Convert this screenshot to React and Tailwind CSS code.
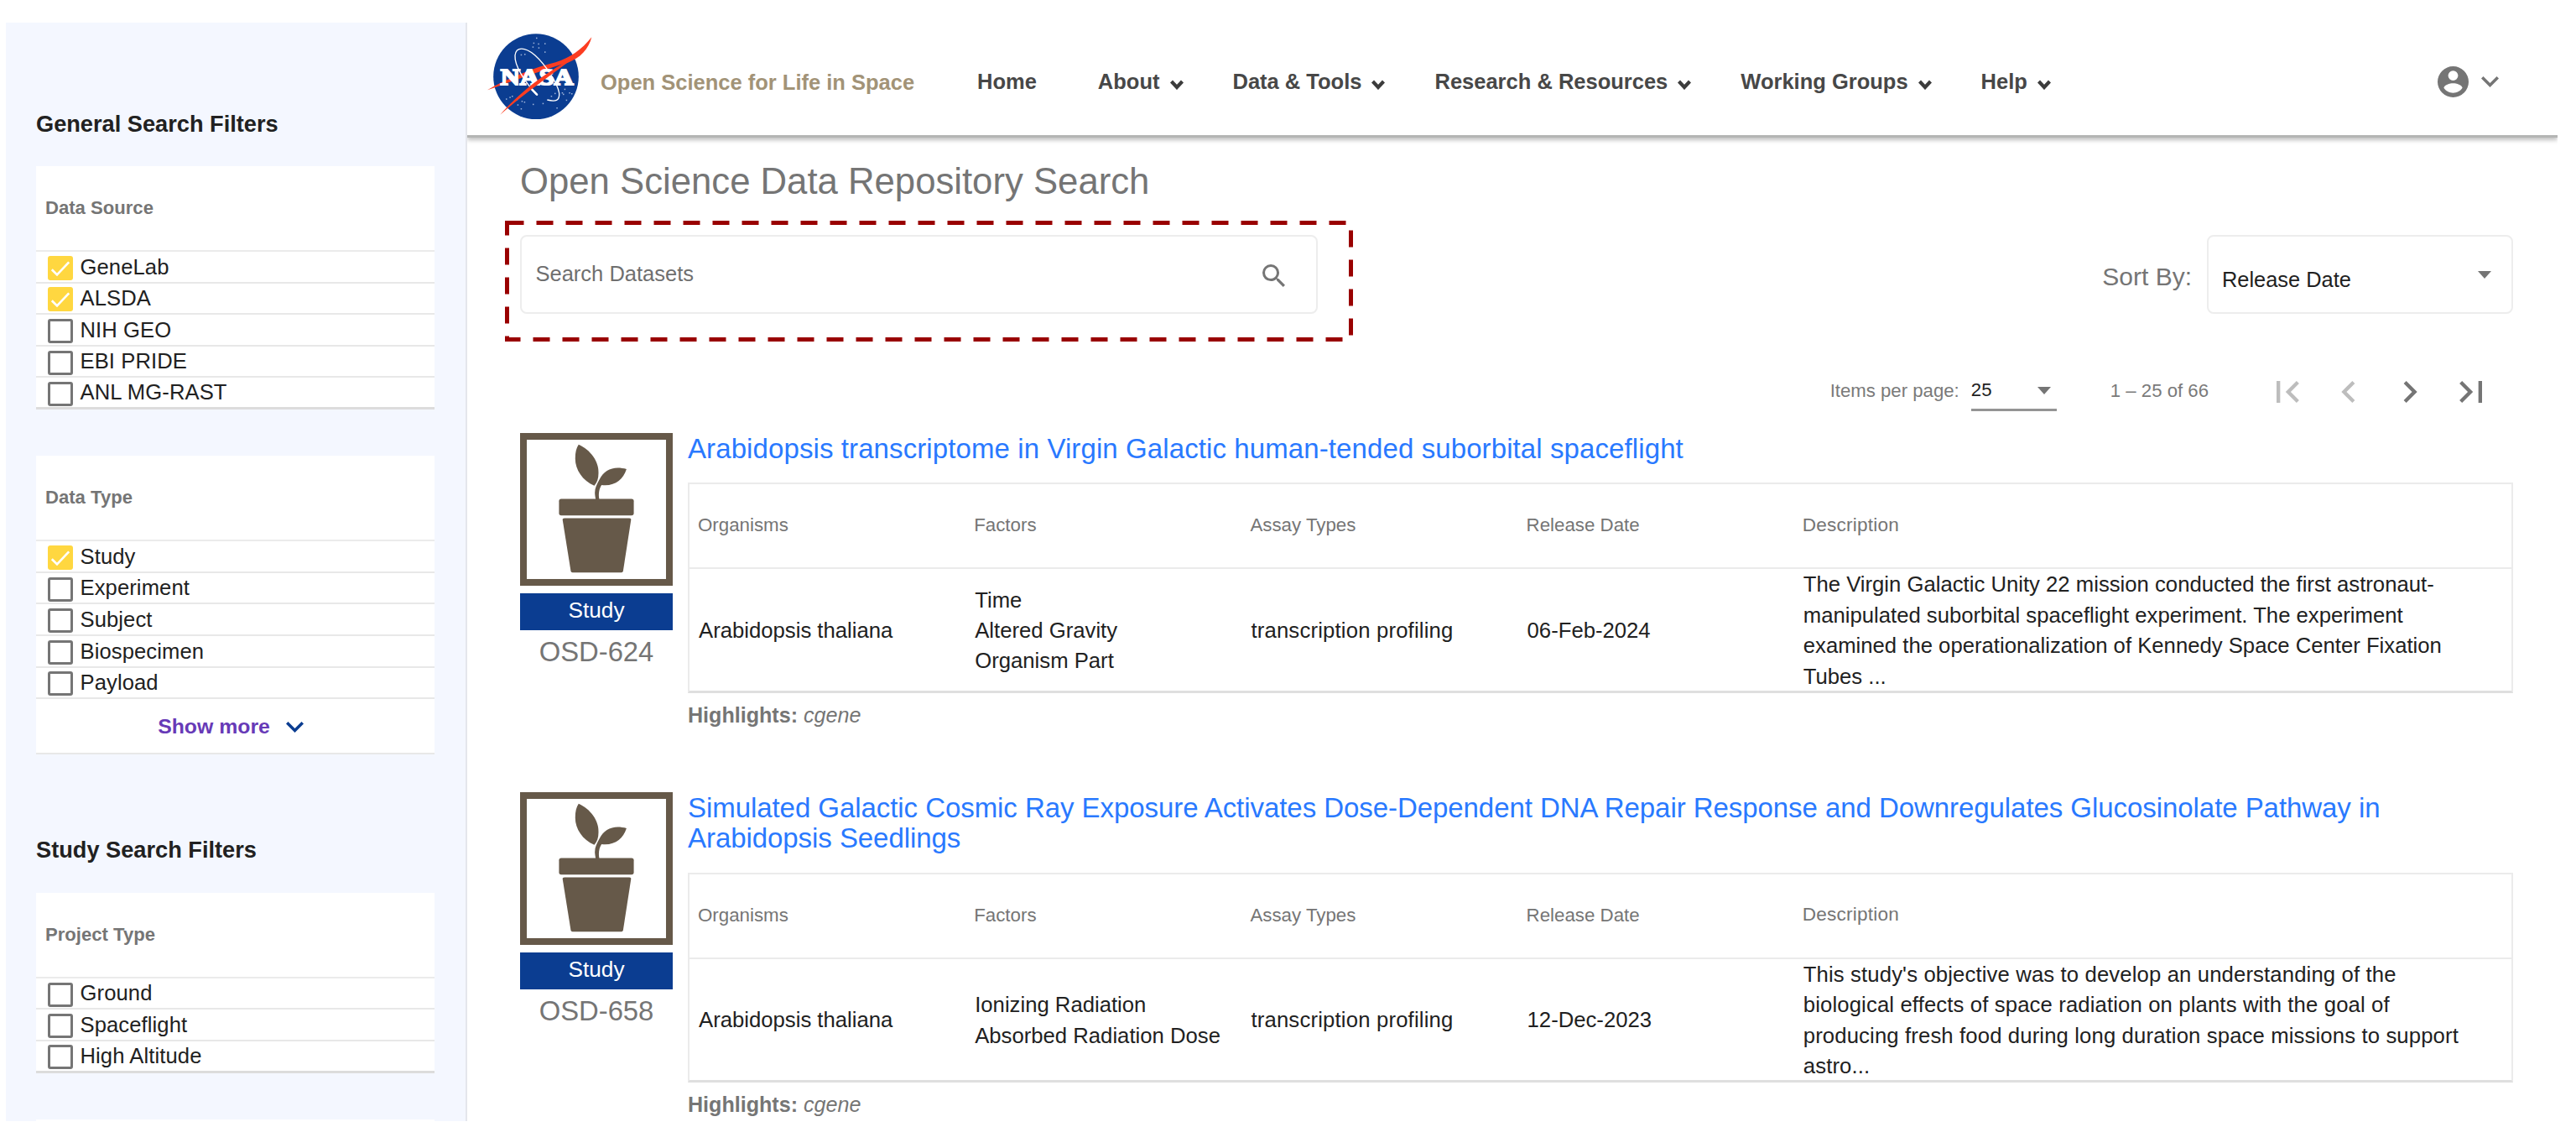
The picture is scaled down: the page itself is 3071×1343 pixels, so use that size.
import React from "react";

const generalFilters = [
  {
    label: "Data Source",
    items: [
      ["GeneLab", true],
      ["ALSDA", true],
      ["NIH GEO", false],
      ["EBI PRIDE", false],
      ["ANL MG-RAST", false],
    ],
  },
  {
    label: "Data Type",
    more: true,
    items: [
      ["Study", true],
      ["Experiment", false],
      ["Subject", false],
      ["Biospecimen", false],
      ["Payload", false],
    ],
  },
];

const studyFilters = {
  label: "Project Type",
  items: [
    ["Ground", false],
    ["Spaceflight", false],
    ["High Altitude", false],
  ],
};

const menus = ["About", "Data & Tools", "Research & Resources", "Working Groups", "Help"];

const columns = ["Organisms", "Factors", "Assay Types", "Release Date"];

const results = [
  {
    id: "OSD-624",
    title: ["Arabidopsis transcriptome in Virgin Galactic human-tended suborbital spaceflight"],
    titleClass: "tracking-[0.1px]",
    descriptionClass: "tracking-normal",
    organisms: "Arabidopsis thaliana",
    factors: ["Time", "Altered Gravity", "Organism Part"],
    assay: "transcription profiling",
    date: "06-Feb-2024",
    description: [
      "The Virgin Galactic Unity 22 mission conducted the first astronaut-",
      "manipulated suborbital spaceflight experiment. The experiment",
      "examined the operationalization of Kennedy Space Center Fixation",
      "Tubes ...",
    ],
  },
  {
    id: "OSD-658",
    title: [
      "Simulated Galactic Cosmic Ray Exposure Activates Dose-Dependent DNA Repair Response and Downregulates Glucosinolate Pathway in",
      "Arabidopsis Seedlings",
    ],
    titleClass: "tracking-[-0.06px]",
    descriptionClass: "tracking-[0.13px]",
    organisms: "Arabidopsis thaliana",
    factors: ["Ionizing Radiation", "Absorbed Radiation Dose"],
    assay: "transcription profiling",
    date: "12-Dec-2023",
    description: [
      "This study's objective was to develop an understanding of the",
      "biological effects of space radiation on plants with the goal of",
      "producing fresh food during long duration space missions to support",
      "astro...",
    ],
  },
];

function Checkbox({ checked }) {
  if (checked) {
    return (
      <span className="block h-[29px] w-[30px] rounded-[3px] bg-[#ffd740]">
        <svg viewBox="0 0 30 29" className="h-[29px] w-[30px]">
          <path d="M4.8 16.2 11 22.4 25.2 7.4" fill="none" stroke="#fff" strokeWidth="2.7" />
        </svg>
      </span>
    );
  }
  return <span className="block h-[29px] w-[30px] rounded-[3px] border-[3.5px] border-[#757575]" />;
}

function Chevron({ className }) {
  return (
    <svg viewBox="6 8.59 12 7.41" className={className} fill="currentColor">
      <path d="M16.59 8.59 12 13.17 7.41 8.59 6 10l6 6 6-6z" />
    </svg>
  );
}

function FilterCard({ label, items, more }) {
  return (
    <section className="bg-white">
      <div className="flex h-[102px] items-center border-b-2 border-[#ebebeb] pb-[1px] pl-[11px] text-[22.1px] font-bold text-[#757575]">
        {label}
      </div>
      {items.map(([name, checked]) => (
        <div
          key={name}
          className="flex h-[37.6px] items-center gap-[9px] border-b-2 border-[#e8e8e8] pl-[13.5px] text-[25.6px] tracking-[0.1px] last:border-b-[3px] last:border-[#dcdcdc]"
        >
          <span className="mt-[3px]">
            <Checkbox checked={checked} />
          </span>
          <span>{name}</span>
        </div>
      ))}
      {more && (
        <div className="flex h-[66px] items-center justify-center gap-[19px] border-b-2 border-[#e8e8e8] pr-[11px] text-[24.8px] font-bold text-[#673ab7]">
          <span>Show more</span>
          <Chevron className="mt-[3px] h-[13px] w-[21px] text-[#0b3d91]" />
        </div>
      )}
    </section>
  );
}

function Sidebar() {
  return (
    <aside className="h-[1309px] w-[550px] shrink-0 overflow-hidden border-r-2 border-[#e4e6ec] bg-[#f4f7ff] pr-[37px] pl-[36px]">
      <h2 className="h-[171px] pt-[101px] text-[27.2px] leading-[40px] font-bold">General Search Filters</h2>
      <div className="flex flex-col gap-[55.3px]">
        {generalFilters.map((f) => (
          <FilterCard key={f.label} {...f} />
        ))}
      </div>
      <h2 className="h-[164.5px] pt-[93.5px] text-[27.2px] leading-[40px] font-bold">Study Search Filters</h2>
      <FilterCard {...studyFilters} />
      <div className="mt-[55.5px] h-[20px] bg-white" />
    </aside>
  );
}

function NasaLogo() {
  const stars = [
    [192, 44], [182, 62], [199, 65], [222, 64], [179, 76], [200, 79], [222, 94],
    [84, 262], [97, 256], [122, 264], [125, 283], [140, 270], [149, 273], [137, 297],
    [180, 281], [215, 278], [265, 294], [293, 227], [288, 245], [299, 266], [310, 240],
    [258, 242], [245, 252], [284, 240], [318, 243], [137, 104], [150, 102], [105, 252],
  ];
  return (
    <svg viewBox="0 0 420 375" className="h-[125px] w-[140px] shrink-0">
      <circle cx="192" cy="183.500" r="152.500" fill="#0b3d91" />
      {stars.map(([x, y]) => (
        <rect key={x + "-" + y} x={x} y={y} width="4.500" height="4.500" fill="#9fb4da" />
      ))}
      <path d="M18 232C90 190 190 150 262 133 315 116 355 88 391 43 380 86 350 118 306 134 240 152 130 192 18 232z" fill="#fc3d21" />
      <text
        x="65"
        y="212"
        textLength="261"
        lengthAdjust="spacingAndGlyphs"
        fill="#fff"
        stroke="#fff"
        strokeWidth="6"
        className="font-['Liberation_Serif'] text-[82px] font-bold"
      >
        NASA
      </text>
      <path
        d="M193 247C150 200 115 145 117 108 121 76 152 78 188 107 225 140 268 205 275 243 277 270 262 275 232 267"
        fill="none"
        stroke="#fff"
        strokeWidth="4"
      />
      <path d="M172 224 195 248" stroke="#fff" strokeWidth="8" strokeLinecap="round" />
      <path d="M64 320C125 250 220 170 322 120 270 162 165 232 64 320z" fill="#fc3d21" />
    </svg>
  );
}

function Header() {
  return (
    <header className="flex h-[137px] items-center border-b-[3px] border-[#b4b5b4] bg-white pl-[18px] text-[25.5px] font-bold shadow-[0_3px_5px_rgba(0,0,0,0.25)]">
      <div className="-mt-[3px]">
        <NasaLogo />
      </div>
      <div className="mt-[8px] ml-[1px] w-[449px] text-[#a29377]">Open Science for Life in Space</div>
      <nav className="mt-[6px] flex items-center gap-[59px] text-[#474747]">
        <span className="mr-[14px]">Home</span>
        {menus.map((m) => (
          <span key={m} className="flex items-center gap-[12px]">
            {m}
            <svg viewBox="0 0 16 12" className="mt-[8px] h-[12px] w-[16px]">
              <path d="M1.500 2 8 9 14.500 2" fill="none" stroke="#3c3c3c" strokeWidth="4.200" />
            </svg>
          </span>
        ))}
      </nav>
      <div className="mt-[6px] mr-[70px] ml-auto flex items-center gap-[15px] text-[#757575]">
        <svg viewBox="2 2 20 20" className="h-[37px] w-[37px]" fill="currentColor" fillRule="evenodd">
          <path d="M12 2a10 10 0 1 0 0 20 10 10 0 0 0 0-20zm0 2.800a3.200 3.200 0 1 1 0 6.400 3.200 3.200 0 0 1 0-6.400zm0 14.400c-2.500 0-4.710-1.280-6-3.220.03-1.990 4-3.080 6-3.080s5.970 1.090 6 3.080c-1.290 1.940-3.500 3.220-6 3.220z" />
        </svg>
        <Chevron className="h-[13px] w-[21px]" />
      </div>
    </header>
  );
}

function Triangle() {
  return <span className="block border-x-[8.5px] border-t-[9px] border-x-transparent border-t-[#757575]" />;
}

function SearchRow() {
  return (
    <div className="relative flex h-[94px] items-stretch justify-between">
      <div className="flex w-[951px] items-center justify-between rounded-[8px] border-2 border-[#ededed] pr-[37px] pl-[16.5px] text-[25.500px] text-[#6f6f6f]">
        <span className="-mt-[1px]">Search Datasets</span>
        <svg viewBox="3 3 17.490 17.490" className="mt-[3px] h-[27px] w-[27px]" fill="#757575">
          <path d="M15.500 14h-.790l-.280-.270A6.471 6.471 0 0 0 16 9.500 6.500 6.500 0 1 0 9.500 16c1.610 0 3.090-.590 4.230-1.570l.270.280v.790l5 4.990L20.490 19l-4.990-5zm-6 0C7.010 14 5 11.990 5 9.500S7.010 5 9.500 5 14 7.010 14 9.500 11.990 14 9.500 14z" />
        </svg>
      </div>
      {/* Dashed outline that calls attention to the search field */}
      <svg viewBox="0 0 1012 145" className="absolute -top-[17px] -left-[18px] h-[145px] w-[1012px]">
        <rect x="2.500" y="2.500" width="1006" height="139" fill="none" stroke="#990000" strokeWidth="5" strokeDasharray="20 15" />
      </svg>
      <div className="flex items-center gap-[18px]">
        <span className="mt-[4px] text-[30px] text-[#757575]">Sort By:</span>
        <div className="flex h-[94px] w-[365px] items-center justify-between rounded-[8px] border-2 border-[#ededed] pr-[24px] pl-[16px]">
          <span className="mt-[13px] text-[25.400px]">Release Date</span>
          <Triangle />
        </div>
      </div>
    </div>
  );
}

const pageIcons = [
  ["M18.410 16.590 13.820 12l4.590-4.590L17 6l-6 6 6 6zM6 6h2v12H6z", "#bdbdbd"],
  ["M15.410 7.410 14 6l-6 6 6 6 1.410-1.410L10.830 12z", "#bdbdbd"],
  ["M10 6 8.590 7.410 13.170 12l-4.580 4.590L10 18l6-6z", "#757575"],
  ["M5.590 7.410 10.180 12l-4.590 4.590L7 18l6-6-6-6zM16 6h2v12h-2z", "#757575"],
];

function Paginator() {
  return (
    <div className="mt-[67px] flex h-[52px] items-center justify-end pr-[24px] text-[22.200px] text-[#7a7a7a]">
      <span className="-mt-[3px]">Items per page:</span>
      <span className="ml-[14px] flex h-[46px] w-[102px] items-center justify-between border-b-[3px] border-[#949494] pr-[7px] text-[#212121]">
        <span className="-mt-[1px]">25</span>
        <Triangle />
      </span>
      <span className="-mt-[3px] ml-[64px]">1 – 25 of 66</span>
      <span className="ml-[68px] flex gap-[21px]">
        {pageIcons.map(([d, color]) => (
          <svg key={d} viewBox="0 0 24 24" className="h-[52px] w-[52px]" fill={color}>
            <path d={d} />
          </svg>
        ))}
      </span>
    </div>
  );
}

function PlantIcon() {
  return (
    <svg viewBox="61 49 545 545" className="block h-[182px] w-[182px]" fill="#665949">
      <rect x="73" y="61" width="521" height="521" fill="#fff" stroke="#665949" strokeWidth="24" />
      <path d="M270 90C312 108 344 152 341 192 341 212 336 226 326 237 284 218 258 180 258 140 258 118 262 102 270 90z" />
      <path d="M441 178C396 165 362 180 345 214 335 232 328 246 328 262 328 270 330 279 331 286H344C340 268 343 248 352 235 400 240 428 216 441 178z" />
      <rect x="200" y="284" width="267" height="59" rx="8" />
      <path d="M220 353H451q7 0 6 7L429 541q-1 6-6 6H248q-5 0-6-6L213 360q-1-7 7-7z" />
    </svg>
  );
}

function Result({ id, title, titleClass, descriptionClass, organisms, factors, assay, date, description }) {
  return (
    <article className="flex gap-[18px]">
      <div className="w-[182px] shrink-0 text-center">
        <PlantIcon />
        <div className="mt-[9px] h-[44px] bg-[#0b3d91] text-[26.200px] leading-[41px] text-white">Study</div>
        <div className="mt-[7px] text-[32.800px] leading-[38px] text-[#757575]">{id}</div>
      </div>
      <div className="flex-1">
        <h3 className={"pt-[1px] pb-[22px] text-[33px] leading-[36.400px] text-[#2979ff] " + titleClass}>
          {title.map((line) => (
            <div key={line} className="whitespace-nowrap">
              {line}
            </div>
          ))}
        </h3>
        <div className="h-[250.500px] border-2 border-b-[3px] border-[#ebebeb] border-b-[#dfdfdf]">
          <div className="grid h-[101px] grid-cols-[329.200px_329.200px_329.200px_329.200px_1fr] items-center border-b-2 border-[#ebebeb] pb-[2px] pl-[10px] text-[22.300px] text-[#757575]">
            {columns.map((c) => (
              <span key={c}>{c}</span>
            ))}
            <span className="text-[22.600px] tracking-[0.2px]">Description</span>
          </div>
          <div className="grid grid-cols-[329.200px_329.200px_329.200px_329.200px_1fr] items-center pl-[11px] text-[25.700px] leading-[36.400px] whitespace-nowrap">
            <span>{organisms}</span>
            <span>
              {factors.map((f) => (
                <div key={f}>{f}</div>
              ))}
            </span>
            <span className="tracking-[0.18px]">{assay}</span>
            <span>{date}</span>
            <span className={descriptionClass}>
              {description.map((d) => (
                <div key={d}>{d}</div>
              ))}
            </span>
          </div>
        </div>
        <div className="mt-[8px] text-[25.100px] leading-[36px] text-[#757575]">
          <b>Highlights:</b> <i>cgene</i>
        </div>
      </div>
    </article>
  );
}

export default function App() {
  return (
    <div className="flex h-[1343px] w-[3071px] overflow-hidden bg-white pt-[27px] pl-[7px] font-['Liberation_Sans',Arial,sans-serif] leading-normal text-[#212121]">
      <Sidebar />
      <main className="h-[1309px] w-[2492px] shrink-0 overflow-hidden">
        <Header />
        <div className="pr-[53px] pl-[63px]">
          <h1 className="h-[116px] pt-[22px] text-[43.700px] leading-[60px] text-[#757575]">
            Open Science Data Repository Search
          </h1>
          <SearchRow />
          <Paginator />
          <div className="mt-[23px] flex flex-col gap-[74px]">
            {results.map((r) => (
              <Result key={r.id} {...r} />
            ))}
          </div>
        </div>
      </main>
    </div>
  );
}
